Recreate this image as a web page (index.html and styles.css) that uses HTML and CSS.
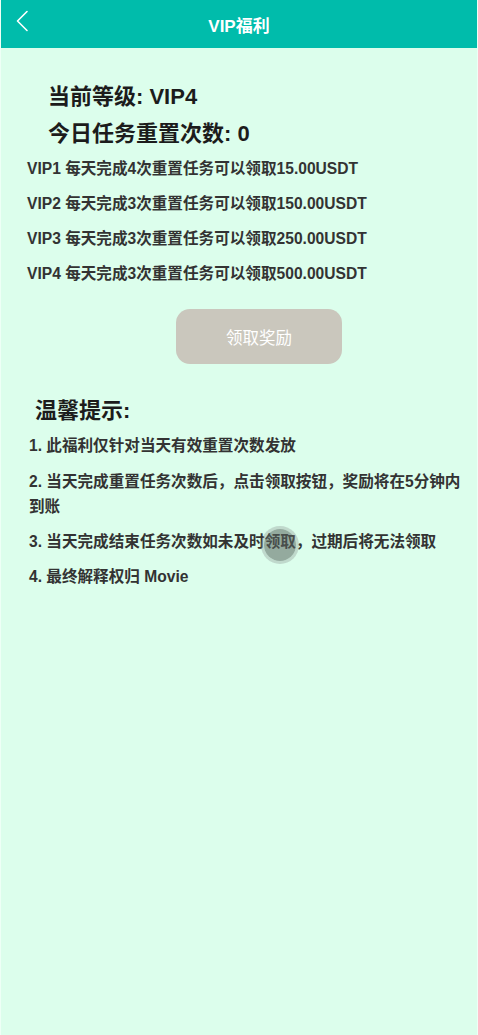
FILE: index.html
```html
<!DOCTYPE html>
<html>
<head>
  <title>VIP福利</title>
  <meta name="viewport" content="width=device-width, initial-scale=1.0">
  <link rel="stylesheet" href="styles.css">
</head>
<body>
  <div class="page">
    <div class="header">
      <svg class="back" width="20" height="24" viewBox="0 0 20 24">
        <path d="M13 2.5 L3.5 12 L13 21.5" fill="none" stroke="#ffffff" stroke-width="1.6" stroke-linecap="round" stroke-linejoin="round"/>
      </svg>
      <h1 class="title">VIP福利</h1>
    </div>

    <div class="content">
      <h2 class="level">当前等级: VIP4</h2>
      <h2 class="level">今日任务重置次数: 0</h2>

      <div class="rules">
        <p>VIP1 每天完成4次重置任务可以领取15.00USDT</p>
        <p>VIP2 每天完成3次重置任务可以领取150.00USDT</p>
        <p>VIP3 每天完成3次重置任务可以领取250.00USDT</p>
        <p>VIP4 每天完成3次重置任务可以领取500.00USDT</p>
      </div>

      <div class="btn-row">
        <button class="claim-btn">领取奖励</button>
      </div>

      <h2 class="tips-title">温馨提示:</h2>
      <div class="tips">
        <p>1. 此福利仅针对当天有效重置次数发放</p>
        <p>2. 当天完成重置任务次数后，点击领取按钮，奖励将在5分钟内到账</p>
        <p>3. 当天完成结束任务次数如未及时领取，过期后将无法领取</p>
        <p>4. 最终解释权归 Movie</p>
      </div>
    </div>

    <div class="touch-dot"></div>
  </div>
</body>
</html>
```

FILE: styles.css
```css
body {
  margin: 0;
  padding: 0;
  font-family: "Liberation Sans", "Noto Sans CJK SC", sans-serif;
  background-color: #dcfeec;
  color: #2a2a2a;
}

.page {
  position: relative;
  min-height: 1035px;
  border-left: 1px solid #eefff6;
  border-right: 1px solid #eefff6;
  box-sizing: border-box;
}

.header {
  height: 48px;
  background-color: #00bcab;
  display: flex;
  align-items: center;
  justify-content: center;
  position: relative;
}

.back {
  position: absolute;
  left: 13px;
  top: 9px;
}

.title {
  margin: 0;
  font-size: 17px;
  font-weight: bold;
  color: #ffffff;
}

.content {
  padding-top: 30px;
}

.level {
  margin: 0;
  padding-left: 47px;
  font-size: 22px;
  line-height: 37px;
  font-weight: bold;
  color: #1c1c1c;
}

.rules {
  padding-left: 26px;
  margin-top: 4px;
}

.rules p,
.tips p {
  margin: 0 0 10px 0;
  font-size: 15.6px;
  line-height: 25px;
  font-weight: bold;
  color: #333333;
}

.btn-row {
  display: flex;
  padding-left: 175px;
  margin-top: 23px;
}

.claim-btn {
  width: 166px;
  height: 55px;
  border: none;
  border-radius: 14px;
  background-color: #cac7bd;
  color: #ffffff;
  font-family: "Liberation Sans", "Noto Sans CJK SC", sans-serif;
  font-size: 16.5px;
}

.tips-title {
  margin: 28px 0 0 0;
  padding-left: 34px;
  font-size: 22px;
  line-height: 37px;
  font-weight: bold;
  color: #1c1c1c;
}

.tips {
  padding-left: 28px;
  padding-right: 10px;
  margin-top: 4px;
}

.tips p:first-child {
  margin-bottom: 11px;
}

.touch-dot {
  position: absolute;
  left: 263px;
  top: 529px;
  width: 32px;
  height: 32px;
  border-radius: 50%;
  background-color: rgba(90, 100, 95, 0.55);
  box-shadow: 0 0 0 3px rgba(140, 150, 145, 0.35);
}
```
